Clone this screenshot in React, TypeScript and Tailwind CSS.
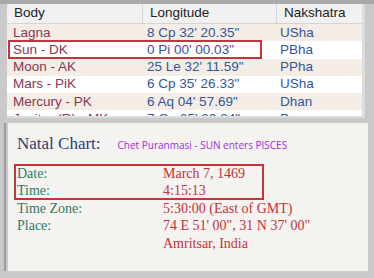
const rows = [
  { body: 'Lagna', lon: "8 Cp 32' 20.35\"", nak: 'USha', bg: 'bg-[#f3ede5]' },
  { body: 'Sun - DK', lon: "0 Pi 00' 00.03\"", nak: 'PBha', bg: 'bg-white' },
  { body: 'Moon - AK', lon: "25 Le 32' 11.59\"", nak: 'PPha', bg: 'bg-[#f3ede5]' },
  { body: 'Mars - PiK', lon: "6 Cp 35' 26.33\"", nak: 'USha', bg: 'bg-white' },
  { body: 'Mercury - PK', lon: "6 Aq 04' 57.69\"", nak: 'Dhan', bg: 'bg-[#f3ede5]' },
  { body: 'Jupiter (R) - MK', lon: "7 Ge 05' 20.24\"", nak: 'Puna', bg: 'bg-white' },
]

const details = [
  { label: 'Date:', value: 'March 7, 1469' },
  { label: 'Time:', value: '4:15:13' },
  { label: 'Time Zone:', value: '5:30:00 (East of GMT)' },
  { label: 'Place:', value: '74 E 51\' 00", 31 N 37\' 00"' },
  { label: '', value: 'Amritsar, India' },
]

export default function App() {
  return (
    <div className="w-[374px] h-[278px] bg-[#c9c9c9] overflow-hidden border-t-[4px] border-[#a9a9a9]">
      {/* planet table */}
      <div className="relative ml-[7px] w-[358px] h-[114px] bg-white overflow-hidden border-r-[3px] border-b-2 border-[#dcdcdc] font-['Liberation_Sans',sans-serif] text-[13.5px]">
        <div className="flex h-[20px] items-center bg-[#f1f1f1] border-b border-[#d5d5d5] text-[#222]">
          <div className="w-[136px] pl-[7px] border-r border-[#d5d5d5] h-full flex items-center">Body</div>
          <div className="w-[134px] pl-[7px] border-r border-[#d5d5d5] h-full flex items-center">Longitude</div>
          <div className="flex-1 pl-[7px]">Nakshatra</div>
        </div>
        {rows.map((r) => (
          <div key={r.body} className={`flex h-[17.3px] items-center ${r.bg}`}>
            <div className="w-[136px] pl-[6px] text-[#8a3654]">{r.body}</div>
            <div className="w-[134px] pl-[4px] text-[#33569a]">{r.lon}</div>
            <div className="flex-1 pl-[3px] text-[#33569a]">{r.nak}</div>
          </div>
        ))}
        <div className="absolute left-[1px] top-[36px] w-[254px] h-[19px] border-2 border-[#c7333c]" />
      </div>

      <div className="h-[5px]" />

      {/* natal chart details */}
      <div className="flex h-[148px]">
        <div className="ml-[4px] w-[2px] bg-[#9c9c9c]" />
        <div className="relative w-[360px] ml-[2px] bg-[#f4f3f0] pl-[9px] pt-[8px] font-['Liberation_Serif',serif]">
          <div className="flex items-baseline">
            <span className="text-[17px] text-[#2c3d70]">Natal Chart:</span>
            <span className="ml-[17px] text-[10px] text-[#9a2fd6] font-['Open_Sans',sans-serif]">Chet Puranmasi - SUN enters PISCES</span>
          </div>
          <div className="mt-[8px] flex flex-col">
            {details.map((d) => (
              <div key={d.value} className="flex h-[17.5px] items-center text-[14px]">
                <div className="w-[146px] text-[#2f7a68]">{d.label}</div>
                <div className="text-[#c0323a]">{d.value}</div>
              </div>
            ))}
          </div>
          <div className="absolute left-[6px] top-[41px] w-[250px] h-[36px] border-2 border-[#c7333c]" />
        </div>
      </div>
    </div>
  )
}
